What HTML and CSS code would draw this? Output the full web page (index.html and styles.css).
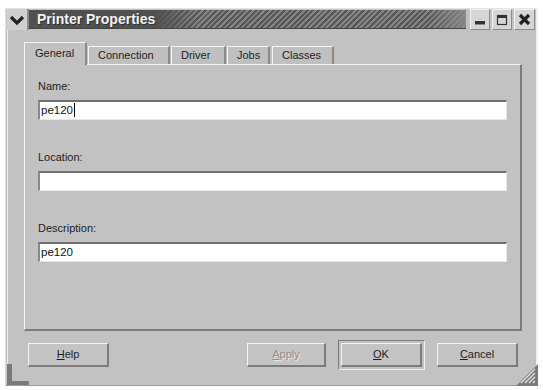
FILE: index.html
```html
<!DOCTYPE html>
<html lang="en">
<head>
  <meta charset="UTF-8">
  <title>Printer Properties</title>
  <link rel="stylesheet" href="styles.css">
</head>
<body>
  <div class="window">
    <div class="titlebar">
      <div class="menu-button">
        <svg width="16" height="12" viewBox="0 0 16 12">
          <path d="M2 3 L8 9 L14 3" fill="none" stroke="#222" stroke-width="3.2" stroke-linejoin="miter"/>
        </svg>
      </div>
      <div class="title">Printer Properties</div>
      <div class="title-button">
        <svg width="12" height="12" viewBox="0 0 12 12"><rect x="1" y="7" width="10" height="3.5" fill="#333"/></svg>
      </div>
      <div class="title-button">
        <svg width="12" height="12" viewBox="0 0 12 12"><rect x="1.5" y="1.5" width="9" height="9" fill="none" stroke="#333" stroke-width="1.2"/><rect x="1" y="1" width="10" height="3" fill="#333"/></svg>
      </div>
      <div class="title-button close">
        <svg width="13" height="13" viewBox="0 0 13 13"><path d="M2 2 L11 11 M11 2 L2 11" stroke="#222" stroke-width="3.2"/></svg>
      </div>
    </div>

    <div class="client">
      <div class="tabs">
        <div class="tab active">General</div>
        <div class="tab">Connection</div>
        <div class="tab">Driver</div>
        <div class="tab">Jobs</div>
        <div class="tab">Classes</div>
      </div>
      <div class="panel">
        <div class="field">
          <div class="label">Name:</div>
          <div class="entry">pe120<span class="caret"></span></div>
        </div>
        <div class="field">
          <div class="label">Location:</div>
          <div class="entry"></div>
        </div>
        <div class="field">
          <div class="label">Description:</div>
          <div class="entry">pe120</div>
        </div>
      </div>
      <div class="button-row">
        <div class="button"><u>H</u>elp</div>
        <div class="spacer"></div>
        <div class="button disabled"><u>A</u>pply</div>
        <div class="default-frame"><div class="button"><u>O</u>K</div></div>
        <div class="button"><u>C</u>ancel</div>
      </div>
    </div>

    <div class="grip-left"></div>
    <svg class="grip-right" width="22" height="22" viewBox="0 0 22 22">
      <path d="M22 0 L22 22 L0 22 Z" fill="#7a7a7a"/>
      <path d="M9 19 L19 9 M13 19 L19 13 M17 19 L19 17 M5 19 L19 5" stroke="#e8e8e8" stroke-width="1.2"/>
    </svg>
  </div>
</body>
</html>
```

FILE: styles.css
```css
body {
  margin: 0;
  background-color: #ffffff;
  font-family: "Liberation Sans", Arial, sans-serif;
  font-size: 11px;
  color: #1e1e1e;
}
.window {
  position: relative;
  margin: 8px 0 0 5px;
  width: 533px;
  height: 378px;
  box-sizing: border-box;
  background-color: #c2c2c2;
  border-left: 1px solid #dcdcdc;
  border-right: 2px solid #f2f2f2;
  border-bottom: 1px solid #9a9a9a;
}
.titlebar {
  display: flex;
  height: 22px;
  border-top: 1px solid #e4e4e4;
  box-sizing: border-box;
}
.menu-button {
  width: 21px;
  display: flex;
  align-items: center;
  justify-content: center;
  background-color: #cfcfcf;
  border-right: 2px solid #8a8a8a;
}
.title {
  flex: 1;
  margin: 1px 2px 1px 0;
  padding-left: 8px;
  line-height: 19px;
  font-size: 14px;
  font-weight: bold;
  color: #f4f4f4;
  text-shadow: 1px 1px 0 #333;
  background:
    linear-gradient(to right, #505050 0, #505050 125px, rgba(80, 80, 80, 0) 170px),
    linear-gradient(to right, rgba(150, 150, 150, 0) 0, rgba(150, 150, 150, 0) 400px, #8c8c8c 442px),
    repeating-linear-gradient(135deg, #575757 0, #575757 2px, #858585 2px, #858585 4px);
  border-bottom: 1px solid #444;
}
.title-button {
  width: 18px;
  margin-left: 2px;
  display: flex;
  align-items: center;
  justify-content: center;
  background-color: #d6d6d6;
  border-top: 1px solid #f2f2f2;
  border-left: 1px solid #f2f2f2;
  border-right: 1px solid #8a8a8a;
  border-bottom: 1px solid #8a8a8a;
}
.title-button.close {
  width: 19px;
  margin-right: 1px;
}
.client {
  height: 355px;
  margin-left: 1px;
  padding: 12px 14px 0 16px;
  box-sizing: border-box;
  border-left: 1px solid #ececec;
}
.tabs {
  display: flex;
  align-items: flex-end;
  height: 22px;
}
.tab {
  height: 17px;
  line-height: 16px;
  padding: 0 9px;
  margin-right: 1px;
  background-color: #c0c0c0;
  border-top: 1px solid #f4f4f4;
  border-left: 1px solid #f4f4f4;
  border-right: 2px solid #8a8a8a;
}
.tab.active {
  height: 22px;
  line-height: 20px;
  width: 40px;
  margin-bottom: -1px;
  position: relative;
  z-index: 1;
  background-color: #c2c2c2;
  padding: 0 10px;
}
.tab:nth-child(2) { width: 61px; }
.tab:nth-child(3) { width: 34px; }
.tab:nth-child(4) { width: 22px; }
.tab:nth-child(5) { width: 41px; margin-left: 1px; }
.panel {
  height: 267px;
  box-sizing: border-box;
  padding: 15px 13px 0 13px;
  border-top: 1px solid #f4f4f4;
  border-left: 1px solid #f4f4f4;
  border-right: 2px solid #7c7c7c;
  border-bottom: 2px solid #7c7c7c;
}
.field {
  margin-bottom: 31px;
}
.label {
  height: 13px;
  line-height: 13px;
  margin-bottom: 7px;
}
.entry {
  height: 20px;
  box-sizing: border-box;
  background-color: #ffffff;
  border-top: 2px solid #707070;
  border-left: 2px solid #888888;
  border-right: 1px solid #e8e8e8;
  border-bottom: 1px solid #e8e8e8;
  padding-left: 1px;
  line-height: 17px;
  font-size: 11.5px;
  color: #111;
}
.caret {
  display: inline-block;
  width: 1px;
  height: 14px;
  margin-left: 1px;
  vertical-align: -3px;
  background-color: #000;
}
.button-row {
  display: flex;
  align-items: center;
  margin-top: 9px;
  padding: 0 4px 0 4px;
}
.spacer {
  flex: 1;
}
.button {
  width: 81px;
  height: 24px;
  box-sizing: border-box;
  line-height: 21px;
  text-align: center;
  background-color: #c4c4c4;
  border-top: 1px solid #f4f4f4;
  border-left: 1px solid #f4f4f4;
  border-right: 2px solid #7c7c7c;
  border-bottom: 2px solid #7c7c7c;
}
.button.disabled {
  width: 79px;
  color: #8e8e8e;
  text-shadow: 1px 1px 0 #e6e6e6;
  margin-right: 12px;
}
.default-frame {
  padding: 2px;
  margin-right: 12px;
  border-top: 1px solid #7c7c7c;
  border-left: 1px solid #7c7c7c;
  border-right: 1px solid #f0f0f0;
  border-bottom: 1px solid #f0f0f0;
}
.grip-left {
  position: absolute;
  left: 1px;
  bottom: 0;
  width: 17px;
  height: 17px;
  border-left: 5px solid #7a7a7a;
  border-bottom: 4px solid #7a7a7a;
}
.grip-right {
  position: absolute;
  right: -2px;
  bottom: -1px;
}
```
